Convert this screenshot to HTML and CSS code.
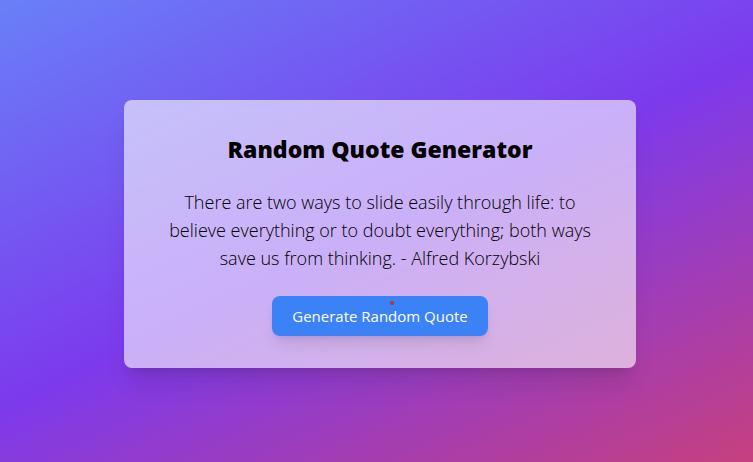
FILE: index.html
```html
<!DOCTYPE html>
<html lang="en">
<head>
<meta charset="utf-8">
<meta name="viewport" content="width=device-width, initial-scale=1">
<title>Random Quote Generator</title>
<link rel="stylesheet" href="styles.css">
</head>
<body>
<main class="card">
  <h1 class="title">Random Quote Generator</h1>
  <p class="quote">There are two ways to slide easily through life: to believe everything or to doubt everything; both ways save us from thinking. - Alfred Korzybski</p>
  <button class="generate" type="button">Generate Random Quote<span class="dot"></span></button>
</main>
</body>
</html>
```

FILE: styles.css
```css
* {
  box-sizing: border-box;
}

body {
  margin: 0;
  min-height: 100vh;
  display: flex;
  align-items: center;
  justify-content: center;
  padding: 16px 0 10px 7px;
  font-family: "Segoe UI", "Open Sans", "Noto Sans", sans-serif;
  color: #000;
  background: linear-gradient(155deg, #6980f8, #7c3aed, #c6407e);
}

.card {
  width: 100%;
  max-width: 512px;
  padding: 32px 40px;
  border-radius: 8px;
  text-align: center;
  background: rgba(255, 255, 255, 0.6);
  box-shadow: 0 20px 25px -5px rgba(0, 0, 0, 0.1), 0 8px 10px -6px rgba(0, 0, 0, 0.1);
}

.title {
  margin: 0 0 22px;
  font-size: 23px;
  line-height: 34px;
  font-weight: 800;
}

.quote {
  margin: 0 0 24px;
  font-size: 18px;
  font-weight: 300;
  line-height: 28px;
}

.generate {
  position: relative;
  height: 40px;
  padding: 0 20px;
  border: 0;
  border-radius: 8px;
  font: inherit;
  font-size: 15px;
  color: #fff;
  background: #3b82f6;
  box-shadow: 0 10px 15px -3px rgba(0, 0, 0, 0.1), 0 4px 6px -4px rgba(0, 0, 0, 0.1);
}

.dot {
  position: absolute;
  top: 5px;
  left: 118px;
  width: 4px;
  height: 4px;
  border-radius: 50%;
  background: #c5283d;
}
```
